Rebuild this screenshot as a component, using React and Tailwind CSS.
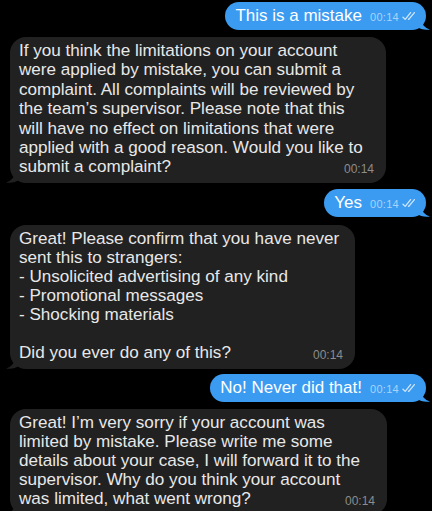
import React from "react";

const font = { fontFamily: '"Liberation Sans", Arial, sans-serif' };

function Checks() {
  return (
    <svg width="16" height="10" viewBox="0 0 16 10" className="ml-[3px]" fill="none" stroke="#cfe6fc" strokeWidth="1.3" strokeLinecap="round" strokeLinejoin="round">
      <path d="M1 6.2 L3.2 8.4 L8.6 1.6" />
      <path d="M6.4 8.2 L6.8 8.4 L12.4 1.6" />
    </svg>
  );
}

function Out({ text, className }) {
  return (
    <div className={"flex justify-end pr-[6px] " + className}>
      <div className="relative">
        <div className="relative z-10 flex items-baseline h-[28px] rounded-[14px] bg-[#3a9bf1] pl-[10px] pr-[8px] pt-[3px]">
          <span className="text-[17px] leading-[22px] text-white">{text}</span>
          <span className="ml-[8px] text-[11px] text-[#a9d3fb] tracking-[0.3px]">00:14</span>
          <Checks />
        </div>
        <svg className="absolute right-[-5px] bottom-0" width="14" height="12" viewBox="0 0 14 12">
          <path d="M0 0 L4 0 C4 6 8 10 13 11.5 C8 12.5 3 11 0 9 Z" fill="#3a9bf1" />
        </svg>
      </div>
    </div>
  );
}

function In({ lines, width, className, lh = "leading-[19.4px]" }) {
  return (
    <div className={"pl-[10px] " + className}>
      <div className="relative" style={{ width }}>
        <div className={"relative z-10 rounded-[16px] bg-[#212121] pl-[9px] pt-[4px] pb-[6px] text-[17.1px] text-[#e8e8e8] " + lh}>
          {lines.map((l, i) => (
            <div key={i} className="whitespace-pre">{l === "" ? "\u00a0" : l}</div>
          ))}
          <span className="absolute right-[12px] bottom-[3px] text-[12px] text-[#8c8c8c]">00:14</span>
        </div>
        <svg className="absolute left-[-5px] bottom-0" width="14" height="12" viewBox="0 0 14 12">
          <path d="M14 0 L10 0 C10 6 6 10 1 11.5 C6 12.5 11 11 14 9 Z" fill="#212121" />
        </svg>
      </div>
    </div>
  );
}

export default function App() {
  return (
    <div className="w-[432px] h-[511px] bg-black overflow-hidden pt-[2px]" style={font}>
      <Out text="This is a mistake" />
      <In
        className="mt-[7px]"
        width={376}
        lines={[
          "If you think the limitations on your account",
          "were applied by mistake, you can submit a",
          "complaint. All complaints will be reviewed by",
          "the team\u2019s supervisor. Please note that this",
          "will have no effect on limitations that were",
          "applied with a good reason. Would you like to",
          "submit a complaint?",
        ]}
      />
      <Out text="Yes" className="mt-[6px]" />
      <In
        className="mt-[8px]"
        width={345}
        lh="leading-[19.1px]"
        lines={[
          "Great! Please confirm that you have never",
          "sent this to strangers:",
          "- Unsolicited advertising of any kind",
          "- Promotional messages",
          "- Shocking materials",
          "",
          "Did you ever do any of this?",
        ]}
      />
      <Out text="No! Never did that!" className="mt-[5px]" />
      <In
        className="mt-[7px]"
        width={377}
        lh="leading-[19.2px]"
        lines={[
          "Great! I\u2019m very sorry if your account was",
          "limited by mistake. Please write me some",
          "details about your case, I will forward it to the",
          "supervisor. Why do you think your account",
          "was limited, what went wrong?",
        ]}
      />
    </div>
  );
}
